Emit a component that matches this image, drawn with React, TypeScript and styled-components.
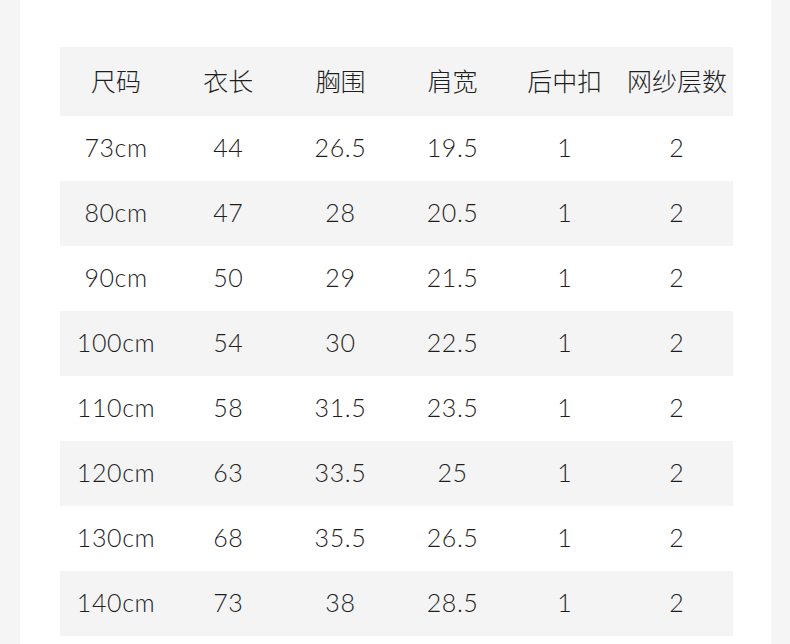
import styled, { createGlobalStyle } from "styled-components";

const headers = ["尺码", "衣长", "胸围", "肩宽", "后中扣", "网纱层数"];

const rows: string[][] = [
  ["73cm", "44", "26.5", "19.5", "1", "2"],
  ["80cm", "47", "28", "20.5", "1", "2"],
  ["90cm", "50", "29", "21.5", "1", "2"],
  ["100cm", "54", "30", "22.5", "1", "2"],
  ["110cm", "58", "31.5", "23.5", "1", "2"],
  ["120cm", "63", "33.5", "25", "1", "2"],
  ["130cm", "68", "35.5", "26.5", "1", "2"],
  ["140cm", "73", "38", "28.5", "1", "2"],
];

const GlobalStyle = createGlobalStyle`
  html, body {
    margin: 0;
    padding: 0;
    background: #f5f5f5;
  }
`;

const Page = styled.div`
  width: 790px;
  height: 644px;
  display: flex;
  padding-left: 20px;
  box-sizing: border-box;
  overflow: hidden;
`;

const Panel = styled.div`
  width: 751px;
  height: 644px;
  background: #ffffff;
  padding: 47px 0 0 40px;
  box-sizing: border-box;
`;

const Table = styled.div`
  width: 673px;
  display: flex;
  flex-direction: column;
`;

const Row = styled.div<{ $shaded: boolean; $head?: boolean }>`
  display: grid;
  grid-template-columns: repeat(6, 1fr);
  height: ${(p) => (p.$head ? "69px" : "65px")};
  background: ${(p) => (p.$shaded ? "#f4f4f4" : "#ffffff")};
`;

const Cell = styled.div<{ $head?: boolean }>`
  display: flex;
  align-items: center;
  justify-content: center;
  color: #1e1e1e;
  font-family: "Lato", "Noto Sans CJK SC", sans-serif;
  font-size: 25px;
  font-weight: 300;
  letter-spacing: ${(p) => (p.$head ? "0" : "0.6px")};
  padding-bottom: ${(p) => (p.$head ? "4px" : "3px")};
`;

export default function App() {
  return (
    <>
      <GlobalStyle />
      <Page>
        <Panel>
          <Table>
            <Row $shaded $head>
              {headers.map((h) => (
                <Cell key={h} $head>
                  {h}
                </Cell>
              ))}
            </Row>
            {rows.map((r, i) => (
              <Row key={r[0]} $shaded={i % 2 === 1}>
                {r.map((v, j) => (
                  <Cell key={j}>{v}</Cell>
                ))}
              </Row>
            ))}
          </Table>
        </Panel>
      </Page>
    </>
  );
}
